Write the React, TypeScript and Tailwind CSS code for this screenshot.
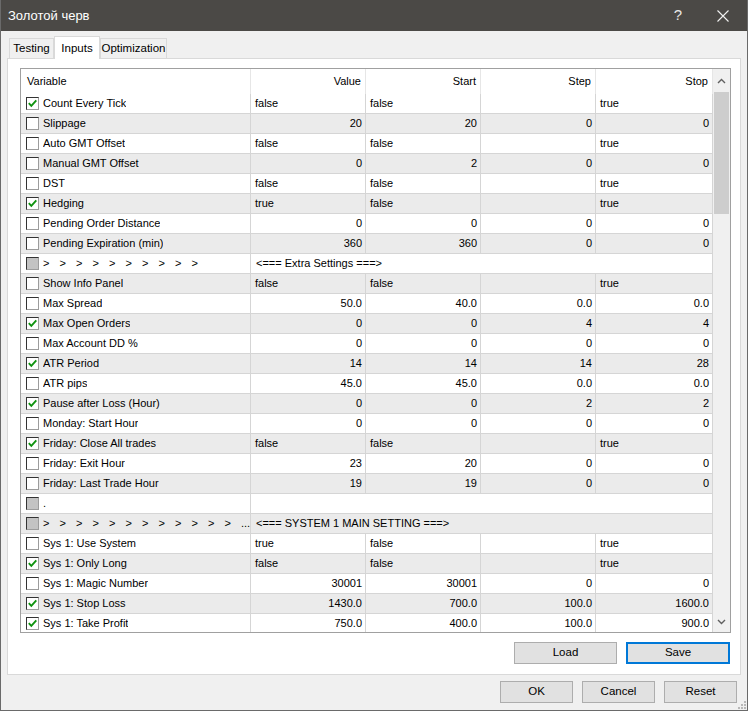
import React from "react";

type Check = "on" | "off" | "mixed";

type Param = {
  kind: "param";
  name: string;
  check: Check;
  value: string;
  start: string;
  step: string;
  stop: string;
};

type Group = {
  kind: "group";
  check: Check;
  arrows: number;
  more?: boolean;
  text?: string;
  label: string;
};

type Row = Param | Group;

const p = (name: string, check: Check, value: string, start: string, step: string, stop: string): Param => ({
  kind: "param",
  name,
  check,
  value,
  start,
  step,
  stop,
});

const rows: Row[] = [
  p("Count Every Tick", "on", "false", "false", "", "true"),
  p("Slippage", "off", "20", "20", "0", "0"),
  p("Auto GMT Offset", "off", "false", "false", "", "true"),
  p("Manual GMT Offset", "off", "0", "2", "0", "0"),
  p("DST", "off", "false", "false", "", "true"),
  p("Hedging", "on", "true", "false", "", "true"),
  p("Pending Order Distance", "off", "0", "0", "0", "0"),
  p("Pending Expiration (min)", "off", "360", "360", "0", "0"),
  { kind: "group", check: "mixed", arrows: 10, label: "<=== Extra Settings ===>" },
  p("Show Info Panel", "off", "false", "false", "", "true"),
  p("Max Spread", "off", "50.0", "40.0", "0.0", "0.0"),
  p("Max Open Orders", "on", "0", "0", "4", "4"),
  p("Max Account DD %", "off", "0", "0", "0", "0"),
  p("ATR Period", "on", "14", "14", "14", "28"),
  p("ATR pips", "off", "45.0", "45.0", "0.0", "0.0"),
  p("Pause after Loss (Hour)", "on", "0", "0", "2", "2"),
  p("Monday: Start Hour", "off", "0", "0", "0", "0"),
  p("Friday: Close All trades", "on", "false", "false", "", "true"),
  p("Friday: Exit Hour", "off", "23", "20", "0", "0"),
  p("Friday: Last Trade Hour", "off", "19", "19", "0", "0"),
  { kind: "group", check: "mixed", arrows: 0, text: ".", label: "" },
  { kind: "group", check: "mixed", arrows: 12, more: true, label: "<=== SYSTEM 1 MAIN SETTING ===>" },
  p("Sys 1: Use System", "off", "true", "false", "", "true"),
  p("Sys 1: Only Long", "on", "false", "false", "", "true"),
  p("Sys 1: Magic Number", "off", "30001", "30001", "0", "0"),
  p("Sys 1: Stop Loss", "on", "1430.0", "700.0", "100.0", "1600.0"),
  p("Sys 1: Take Profit", "on", "750.0", "400.0", "100.0", "900.0"),
];

function CheckBox({ state }: { state: Check }) {
  return (
    <span
      className={`relative inline-flex h-[13px] w-[13px] shrink-0 items-center justify-center border border-t-[#333333] border-l-[#333333] border-r-[#9c9c9c] border-b-[#9c9c9c] ${
        state === "mixed" ? "bg-[#c3c3c3]" : "bg-white"
      }`}
    >
      {state === "on" && (
        <svg width="11" height="11" viewBox="0 0 11 11">
          <path d="M1.8 5.2 L4.3 7.8 L9.3 2.4" fill="none" stroke="#0f930f" strokeWidth="1.9" />
        </svg>
      )}
    </span>
  );
}

function ValueCell({ text, width }: { text: string; width: string }) {
  const isBool = text === "true" || text === "false";
  return (
    <div
      className={`${width} flex h-full shrink-0 items-center border-r border-[#d5d5d5] ${
        isBool ? "justify-start pl-[4px]" : "justify-end pr-[3px]"
      }`}
    >
      {text}
    </div>
  );
}

function Arrows({ count, more }: { count: number; more?: boolean }) {
  return (
    <span className="flex items-center whitespace-pre">
      {Array.from({ length: count }).map((_, i) => (
        <span key={i} className="inline-block w-[16.5px]">
          {">"}
        </span>
      ))}
      {more && <span>...</span>}
    </span>
  );
}

function GridRow({ row, shaded }: { row: Row; shaded: boolean }) {
  const bg = shaded ? "bg-[#ebebeb]" : "bg-white";
  return (
    <div className={`flex h-[20px] shrink-0 border-b border-[#d5d5d5] ${bg}`}>
      <div className="flex h-full w-[230px] shrink-0 items-center gap-[4px] overflow-hidden border-r border-[#d5d5d5] pl-[5px]">
        <CheckBox state={row.check} />
        {row.kind === "param" ? (
          <span className="truncate">{row.name}</span>
        ) : row.arrows > 0 ? (
          <Arrows count={row.arrows} more={row.more} />
        ) : (
          <span>{row.text}</span>
        )}
      </div>
      {row.kind === "param" ? (
        <>
          <ValueCell text={row.value} width="w-[115px]" />
          <ValueCell text={row.start} width="w-[115px]" />
          <ValueCell text={row.step} width="w-[115px]" />
          <ValueCell text={row.stop} width="w-[117px]" />
        </>
      ) : (
        <div className="flex h-full w-[462px] shrink-0 items-center border-r border-[#d5d5d5] pl-[5px]">
          {row.label}
        </div>
      )}
    </div>
  );
}

function ScrollBar() {
  return (
    <div className="flex w-[17px] shrink-0 flex-col bg-[#f0f0f0]">
      <div className="flex h-[23px] items-center justify-center">
        <svg width="9" height="6" viewBox="0 0 9 6">
          <path d="M1 5 L4.5 1.5 L8 5" fill="none" stroke="#606060" strokeWidth="1.4" />
        </svg>
      </div>
      <div className="mx-[1px] h-[122px] bg-[#cdcdcd]" />
      <div className="flex-1" />
      <div className="flex h-[20px] items-center justify-center">
        <svg width="9" height="6" viewBox="0 0 9 6">
          <path d="M1 1 L4.5 4.5 L8 1" fill="none" stroke="#606060" strokeWidth="1.4" />
        </svg>
      </div>
    </div>
  );
}

function HeaderCell({ label, width, left }: { label: string; width: string; left?: boolean }) {
  return (
    <div
      className={`${width} flex h-full shrink-0 items-center border-r border-[#e6e6e6] ${
        left ? "justify-start pl-[6px]" : "justify-end pr-[4px]"
      }`}
    >
      {label}
    </div>
  );
}

function Button({ label, width, primary }: { label: string; width: string; primary?: boolean }) {
  return (
    <button
      type="button"
      className={`${width} h-[22px] bg-[#e1e1e1] text-[11.5px] text-black ${
        primary ? "border-2 border-[#0078d7]" : "border border-[#adadad]"
      }`}
    >
      {label}
    </button>
  );
}

function Tab({ label, active, width }: { label: string; active?: boolean; width: string }) {
  return active ? (
    <div
      className={`${width} relative z-10 -mb-px flex h-[23px] items-start justify-center border border-b-0 border-[#d9d9d9] bg-white pt-[3px]`}
    >
      {label}
    </div>
  ) : (
    <div
      className={`${width} mt-[2px] flex h-[20px] items-center justify-center border border-b-0 border-[#d9d9d9] bg-[#f0f0f0]`}
    >
      {label}
    </div>
  );
}

export default function App() {
  return (
    <div className="relative flex h-[711px] w-[748px] flex-col border-x border-b border-[#6a6a6a] bg-[#f0f0f0] font-['Liberation_Sans',Arial,sans-serif] text-[11px] text-black">
      {/* title bar */}
      <div className="flex h-[31px] shrink-0 items-center bg-[#4b4946] pl-[7px] text-white">
        <span className="text-[13px]">Золотой черв</span>
        <span className="ml-auto w-[20px] text-center text-[15px] text-[#e8e8e8]">?</span>
        <span className="ml-[25px] mr-[14px] flex w-[20px] items-center justify-center">
          <svg width="12" height="12" viewBox="0 0 12 12">
            <path d="M0.5 0.5 L11.5 11.5 M11.5 0.5 L0.5 11.5" stroke="#f2f2f2" strokeWidth="1.1" />
          </svg>
        </span>
      </div>

      <div className="flex flex-1 flex-col px-[6px] pt-[5px]">
        {/* tab strip */}
        <div className="flex h-[22px] items-end pl-[2px] text-[11.5px]">
          <Tab label="Testing" width="w-[45px]" />
          <Tab label="Inputs" width="w-[46px]" active />
          <Tab label="Optimization" width="w-[67px]" />
        </div>

        {/* tab page */}
        <div className="flex h-[617px] flex-col border border-[#d9d9d9] bg-white pl-[12px] pt-[9px]">
          <div className="flex h-[565px] w-[711px] overflow-hidden border border-[#a0a0a0]">
            <div className="flex w-[692px] shrink-0 flex-col">
              <div className="flex h-[25px] shrink-0 bg-white">
                <HeaderCell label="Variable" width="w-[230px]" left />
                <HeaderCell label="Value" width="w-[115px]" />
                <HeaderCell label="Start" width="w-[115px]" />
                <HeaderCell label="Step" width="w-[115px]" />
                <HeaderCell label="Stop" width="w-[117px]" />
              </div>
              {rows.map((row, i) => (
                <GridRow key={i} row={row} shaded={i % 2 === 1} />
              ))}
            </div>
            <ScrollBar />
          </div>
          <div className="mt-[9px] flex justify-end gap-[9px] pr-[10px]">
            <Button label="Load" width="w-[103px]" />
            <Button label="Save" width="w-[104px]" primary />
          </div>
        </div>

        {/* dialog buttons */}
        <div className="mt-[6px] flex justify-end gap-[9px] pr-[4px]">
          <Button label="OK" width="w-[73px]" />
          <Button label="Cancel" width="w-[73px]" />
          <Button label="Reset" width="w-[73px]" />
        </div>
      </div>

      {/* size grip */}
      <svg className="absolute bottom-[1px] right-[1px]" width="8" height="8" viewBox="0 0 8 8">
        <rect x="6" y="0" width="2" height="2" fill="#b8b8b8" />
        <rect x="3" y="3" width="2" height="2" fill="#b8b8b8" />
        <rect x="6" y="3" width="2" height="2" fill="#b8b8b8" />
        <rect x="0" y="6" width="2" height="2" fill="#b8b8b8" />
        <rect x="3" y="6" width="2" height="2" fill="#b8b8b8" />
        <rect x="6" y="6" width="2" height="2" fill="#b8b8b8" />
      </svg>
    </div>
  );
}
